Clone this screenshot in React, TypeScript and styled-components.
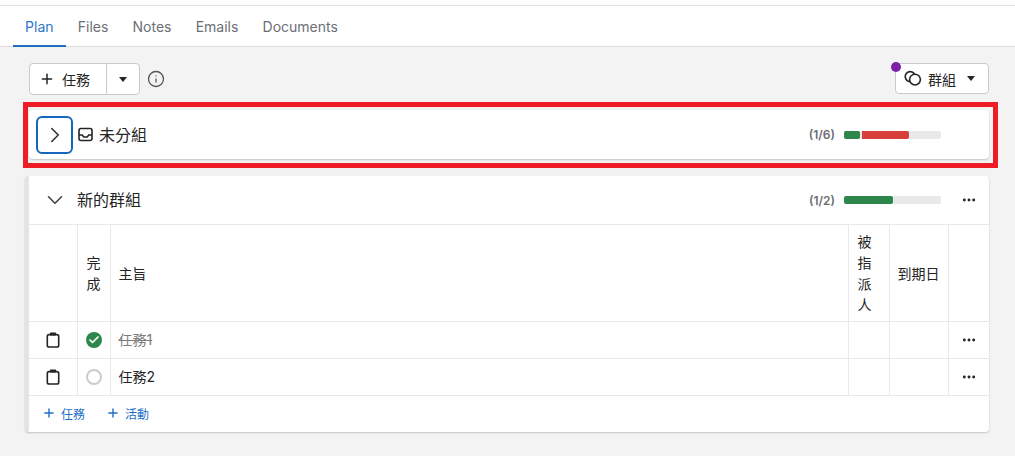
import React from "react";
import styled, { createGlobalStyle } from "styled-components";
import { Plus, Info, ChevronRight, ChevronDown, Check, Ellipsis } from "lucide-react";

const GlobalStyle = createGlobalStyle`
  html, body {
    margin: 0;
    padding: 0;
    background: #f3f3f3;
    font-family: Inter, "Noto Sans CJK TC", sans-serif;
    color: #242424;
  }
`;

const tabs = ["Plan", "Files", "Notes", "Emails", "Documents"];

const App = () => {
  return (
    <Page>
      <GlobalStyle />
      <Header>
        <TabBar>
          {tabs.map((tab, index) => (
            <Tab key={tab} active={index === 0}>
              {tab}
            </Tab>
          ))}
        </TabBar>
      </Header>
      <Content>
        <Toolbar>
          <ToolLeft>
            <SplitButton>
              <SplitMain>
                <Plus size={16} strokeWidth={2.2} />
                <span>任務</span>
              </SplitMain>
              <SplitArrow>
                <Caret />
              </SplitArrow>
            </SplitButton>
            <Info size={18} strokeWidth={1.7} color="#555" />
          </ToolLeft>
          <GroupButton>
            <Dot />
            <RingsIcon />
            <span>群組</span>
            <Caret />
          </GroupButton>
        </Toolbar>

        <Highlight>
          <CollapsedCard>
            <ToggleButton>
              <ChevronRight size={26} strokeWidth={1.5} />
            </ToggleButton>
            <TrayIcon />
            <CollapsedTitle>未分組</CollapsedTitle>
            <Count>(1/6)</Count>
            <Progress>
              <Segment width={16} color="#2d864b" />
              <Segment width={47} color="#d63f3a" gap />
            </Progress>
          </CollapsedCard>
        </Highlight>

        <GroupCard>
          <GroupHeader>
            <ChevronDown size={26} strokeWidth={1.5} color="#444" />
            <GroupTitle>新的群組</GroupTitle>
            <Count>(1/2)</Count>
            <Progress>
              <Segment width={49} color="#2d864b" />
            </Progress>
            <More>
              <Ellipsis size={16} strokeWidth={2.4} />
            </More>
          </GroupHeader>
          <Table>
            <colgroup>
              <col width={48} />
              <col width={33} />
              <col />
              <col width={41} />
              <col width={59} />
              <col width={41} />
            </colgroup>
            <thead>
              <tr>
                <HeadCell />
                <HeadCell narrow>完成</HeadCell>
                <HeadCell>主旨</HeadCell>
                <HeadCell narrow>被指派人</HeadCell>
                <HeadCell>到期日</HeadCell>
                <HeadCell />
              </tr>
            </thead>
            <tbody>
              <tr>
                <IconCell>
                  <TaskIcon />
                </IconCell>
                <StatusCell>
                  <DoneMark>
                    <Check size={12} strokeWidth={3.5} color="#fff" />
                  </DoneMark>
                </StatusCell>
                <SubjectCell done>任務1</SubjectCell>
                <BodyCell />
                <BodyCell />
                <IconCell>
                  <Ellipsis size={16} strokeWidth={2.4} />
                </IconCell>
              </tr>
              <tr>
                <IconCell>
                  <TaskIcon />
                </IconCell>
                <StatusCell>
                  <OpenMark />
                </StatusCell>
                <SubjectCell>任務2</SubjectCell>
                <BodyCell />
                <BodyCell />
                <IconCell>
                  <Ellipsis size={16} strokeWidth={2.4} />
                </IconCell>
              </tr>
            </tbody>
          </Table>
          <Footer>
            <AddLink>
              <Plus size={14} strokeWidth={2.4} />
              任務
            </AddLink>
            <AddLink>
              <Plus size={14} strokeWidth={2.4} />
              活動
            </AddLink>
          </Footer>
        </GroupCard>
      </Content>
    </Page>
  );
};

export default App;

// two overlapping circles
const RingsIcon = () => (
  <svg width="18" height="17" viewBox="0 0 18 17" fill="none" stroke="#242424" strokeWidth="1.6">
    <circle cx="6.2" cy="6.6" r="5" />
    <circle cx="11" cy="9.6" r="5.4" fill="#fff" />
  </svg>
);

// rounded tray with a dip in its middle line
const TrayIcon = () => (
  <svg width="15" height="15" viewBox="0 0 15 15" fill="none" stroke="#242424" strokeWidth="1.6">
    <rect x="1" y="1.5" width="13" height="12" rx="2" />
    <path d="M1 8h3.2l1.6 2h3.4l1.6-2H14" />
  </svg>
);

// clipboard with a heavy clip on top
const TaskIcon = () => (
  <svg width="14" height="16" viewBox="0 0 14 16" fill="none" stroke="#242424" strokeWidth="1.6">
    <rect x="1.3" y="2.6" width="11.4" height="12.4" rx="1.8" />
    <rect x="4" y="0.5" width="6" height="3" rx="0.6" fill="#242424" stroke="none" />
  </svg>
);

const Page = styled.div`
  width: 1015px;
  height: 456px;
  overflow: hidden;
`;

const Header = styled.div`
  height: 47px;
  box-sizing: border-box;
  padding: 5px 0 0;
  background: #fff;
  border-bottom: 1px solid #dcdcdc;
`;

const TabBar = styled.div`
  display: flex;
  height: 41px;
  box-sizing: border-box;
  padding-left: 13px;
  border-top: 1px solid #e0e0e0;
`;

const Tab = styled.div<{ active?: boolean }>`
  padding: 0 12.1px;
  font-size: 14px;
  line-height: 42px;
  height: 41px;
  box-sizing: border-box;
  color: ${(props) => (props.active ? "#2f77c9" : "#6b6f76")};
  border-bottom: 2px solid ${(props) => (props.active ? "#1f6fc4" : "transparent")};
`;

const Content = styled.div`
  padding: 16px 26px 0 23px;
`;

const Toolbar = styled.div`
  display: flex;
  justify-content: space-between;
  align-items: flex-start;
  padding: 0 0 0 6px;
  height: 39px;
`;

const ToolLeft = styled.div`
  display: flex;
  align-items: center;
  gap: 7px;
  height: 32px;
`;

const SplitButton = styled.div`
  display: flex;
  width: 111px;
  height: 32px;
  box-sizing: border-box;
  background: #fff;
  border: 1px solid #c9c9c9;
  border-radius: 4px;
`;

const SplitMain = styled.div`
  display: flex;
  align-items: center;
  gap: 7px;
  width: 77px;
  box-sizing: border-box;
  padding-left: 9px;
  font-size: 14px;
  border-right: 1px solid #c9c9c9;
`;

const SplitArrow = styled.div`
  flex: 1;
  display: flex;
  align-items: center;
  justify-content: center;
`;

const Caret = styled.i`
  display: block;
  width: 0;
  height: 0;
  border-left: 4.5px solid transparent;
  border-right: 4.5px solid transparent;
  border-top: 5px solid #242424;
`;

const GroupButton = styled.div`
  position: relative;
  display: flex;
  align-items: center;
  width: 94px;
  height: 31px;
  box-sizing: border-box;
  padding-left: 8px;
  gap: 6px;
  font-size: 14px;
  background: #fff;
  border: 1px solid #c9c9c9;
  border-radius: 4px;
  & > i {
    margin-left: 5px;
  }
`;

const Dot = styled.div`
  position: absolute;
  left: -5px;
  top: -2px;
  width: 10px;
  height: 10px;
  border-radius: 50%;
  background: #7a1fa8;
`;

const Highlight = styled.div`
  width: 975px;
  height: 66px;
  box-sizing: border-box;
  border: 5px solid #ee1c25;
  padding: 3px 4px 4px 1px;
`;

const CollapsedCard = styled.div`
  display: flex;
  align-items: center;
  height: 49px;
  box-sizing: border-box;
  padding-left: 7px;
  background: #fff;
  border-radius: 4px;
  box-shadow: 0 1px 2px rgba(0, 0, 0, 0.2);
  & > svg {
    flex: none;
  }
`;

const ToggleButton = styled.div`
  display: flex;
  align-items: center;
  justify-content: center;
  width: 37px;
  height: 38px;
  box-sizing: border-box;
  margin-right: 5px;
  color: #333;
  border: 2px solid #1467bd;
  border-radius: 6px;
`;

const CollapsedTitle = styled.div`
  margin: 0 0 2px 6px;
  font-size: 16px;
`;

const Count = styled.div`
  margin-left: auto;
  font-size: 12px;
  font-weight: 600;
  color: #6d6d72;
`;

const Progress = styled.div`
  display: flex;
  width: 97px;
  height: 8px;
  margin: 1px 48px 0 9px;
  border-radius: 2px;
  overflow: hidden;
  background: #e9e9e9;
`;

const Segment = styled.div<{ width: number; color: string; gap?: boolean }>`
  width: ${(props) => props.width}px;
  margin-left: ${(props) => (props.gap ? "2px" : "0")};
  background: ${(props) => props.color};
  border-radius: 0 2px 2px 0;
`;

const GroupCard = styled.div`
  width: 964px;
  height: 256px;
  margin-top: 8px;
  margin-left: 2px;
  background: #fff;
  border-left: 4px solid #e4e4e4;
  box-sizing: border-box;
  border-radius: 4px;
  box-shadow: 0 1px 2px rgba(0, 0, 0, 0.2);
`;

const GroupHeader = styled.div`
  display: flex;
  align-items: center;
  height: 48px;
  box-sizing: border-box;
  padding-left: 13px;
  position: relative;
  & ${Progress} {
    margin-top: 0;
  }
`;

const GroupTitle = styled.div`
  margin: 0 0 3px 9px;
  font-size: 16px;
`;

const More = styled.div`
  position: absolute;
  right: 12px;
  top: 16px;
  display: flex;
`;

const Table = styled.table`
  width: 960px;
  table-layout: fixed;
  border-collapse: collapse;
`;

const HeadCell = styled.th<{ narrow?: boolean }>`
  height: 97px;
  padding: 0 8px 0 ${(props) => (props.narrow ? "9px" : "8px")};
  box-sizing: border-box;
  font-size: 14px;
  font-weight: 400;
  line-height: 21px;
  text-align: left;
  border: 1px solid #e9e9e9;
  &:first-child {
    border-left: 0;
  }
  &:last-child {
    border-right: 0;
  }
`;

const BodyCell = styled.td`
  height: 37px;
  padding: 0 8px 2px;
  box-sizing: border-box;
  font-size: 14px;
  border: 1px solid #e9e9e9;
  &:first-child {
    border-left: 0;
  }
  &:last-child {
    border-right: 0;
  }
`;

const IconCell = styled(BodyCell)`
  padding-bottom: 0;
  text-align: center;
  & svg {
    display: block;
    margin: 0 auto;
  }
`;

const StatusCell = styled(BodyCell)`
  padding: 0 8px;
`;

const SubjectCell = styled(BodyCell)<{ done?: boolean }>`
  color: ${(props) => (props.done ? "#7c7c7c" : "#242424")};
  text-decoration: ${(props) => (props.done ? "line-through" : "none")};
`;

const DoneMark = styled.div`
  display: flex;
  align-items: center;
  justify-content: center;
  width: 16px;
  height: 16px;
  border-radius: 50%;
  background: #2d864b;
`;

const OpenMark = styled.div`
  width: 16px;
  height: 16px;
  box-sizing: border-box;
  border-radius: 50%;
  border: 2px solid #cccccc;
`;

const Footer = styled.div`
  display: flex;
  align-items: center;
  gap: 21px;
  height: 34px;
  padding-left: 13px;
`;

const AddLink = styled.div`
  display: flex;
  align-items: center;
  gap: 5px;
  font-size: 12px;
  color: #1f6fc4;
`;
